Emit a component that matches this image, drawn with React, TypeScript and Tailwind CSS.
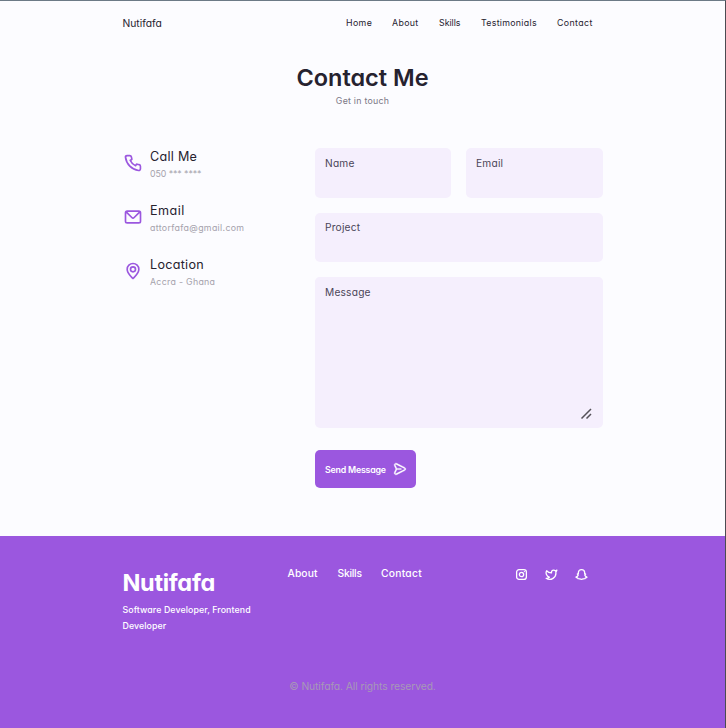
import type { ReactNode } from 'react';

type IconProps = { className: string; children: ReactNode };

function SolidIcon({ className, children }: IconProps) {
  return (
    <svg viewBox="0 0 24 24" fill="currentColor" className={`block shrink-0 ${className}`}>
      {children}
    </svg>
  );
}

function LineIcon({ className, children }: IconProps) {
  return (
    <svg
      viewBox="0 0 24 24"
      fill="none"
      stroke="currentColor"
      strokeWidth="2.4"
      strokeLinecap="round"
      strokeLinejoin="round"
      className={`block shrink-0 ${className}`}
    >
      {children}
    </svg>
  );
}

const contacts = [
  {
    title: 'Call Me',
    detail: '050 *** ****',
    iconClass: 'mt-[4.5px]',
    titleClass: 'tracking-[0.28px]',
    detailClass: 'tracking-[-0.07px]',
    path: 'M19.44,13c-.22,0-.45-.07-.67-.12a9.44,9.44,0,0,1-1.31-.39,2,2,0,0,0-2.48,1l-.22.45a12.18,12.18,0,0,1-2.66-2,12.18,12.18,0,0,1-2-2.66L10.52,9a2,2,0,0,0,1-2.48,10.33,10.33,0,0,1-.39-1.31c-.05-.22-.09-.45-.12-.68a3,3,0,0,0-3-2.49h-3a3,3,0,0,0-3,3.41A19,19,0,0,0,18.53,21.91l.38,0a3,3,0,0,0,2-.76,3,3,0,0,0,1-2.25v-3A3,3,0,0,0,19.44,13Zm.5,6a1,1,0,0,1-.34.75,1.05,1.05,0,0,1-.82.25A17,17,0,0,1,4.07,5.22a1.09,1.09,0,0,1,.25-.82,1,1,0,0,1,.75-.34h3a1,1,0,0,1,1,.79q.06.41.15.81a11.12,11.12,0,0,0,.46,1.55l-1.4.65a1,1,0,0,0-.49,1.33,14.49,14.49,0,0,0,7,7,1,1,0,0,0,.76,0,1,1,0,0,0,.57-.52l.62-1.4a13.69,13.69,0,0,0,1.58.46q.4.09.81.15a1,1,0,0,1,.79,1Z',
  },
  {
    title: 'Email',
    detail: 'attorfafa@gmail.com',
    iconClass: 'mt-[5px]',
    titleClass: 'tracking-[0.45px]',
    detailClass: 'tracking-[0.33px]',
    path: 'M19,4H5A3,3,0,0,0,2,7V17a3,3,0,0,0,3,3H19a3,3,0,0,0,3-3V7A3,3,0,0,0,19,4Zm-.41,2-5.88,5.88a1,1,0,0,1-1.42,0L5.41,6ZM20,17a1,1,0,0,1-1,1H5a1,1,0,0,1-1-1V7.41l5.88,5.88a3,3,0,0,0,4.24,0L20,7.41Z',
  },
  {
    title: 'Location',
    detail: 'Accra - Ghana',
    iconClass: 'mt-[5px]',
    titleClass: 'tracking-[0.28px]',
    detailClass: 'tracking-[0.3px]',
    path: 'M12,2A8,8,0,0,0,4,9.92c0,5.48,7.05,11.58,7.35,11.84a1,1,0,0,0,1.3,0C13,21.5,20,15.4,20,9.92A8,8,0,0,0,12,2Zm0,17.65c-1.67-1.59-6-6-6-9.73a6,6,0,0,1,12,0C18,13.7,13.67,18.06,12,19.65ZM12,6a4,4,0,1,0,4,4A4,4,0,0,0,12,6Zm0,6a2,2,0,1,1,2-2A2,2,0,0,1,12,12Z',
  },
];

const navLinks = [
  { label: 'Home', className: 'w-[46px] tracking-[0.4px]' },
  { label: 'About', className: 'w-[47px] tracking-[0.35px]' },
  { label: 'Skills', className: 'w-[42px]' },
  { label: 'Testimonials', className: 'w-[76px] tracking-[0.3px]' },
  { label: 'Contact', className: 'w-[46px] tracking-[0.4px]' },
];

function Field({ label, className }: { label: string; className: string }) {
  return (
    <div className={`rounded-[5px] bg-[#f5effd] px-[10px] text-[10.2px] leading-[15px] tracking-[0.2px] text-[#4a4558] ${className}`}>
      {label}
    </div>
  );
}

export default function App() {
  return (
    <div className="flex h-[728px] w-[726px] flex-col border-t border-r border-t-[#6c7a86] border-r-[#4b4b52] bg-[#fcfcff] font-['Inter','Open_Sans',sans-serif] whitespace-nowrap text-[#26222f] [font-feature-settings:'cv11']">
      <header className="flex h-[45px] items-center pl-[122.5px]">
        <a className="w-[223.5px] pt-px text-[10.3px] font-[430]">Nutifafa</a>
        <nav className="flex pb-[2px] text-[8.8px] font-[430]">
          {navLinks.map((link) => (
            <a key={link.label} className={link.className}>{link.label}</a>
          ))}
        </nav>
      </header>

      <main className="h-[490px]">
        <div className="flex flex-col items-center pt-[15px]">
          <h1 className="text-[23.5px] leading-[34px] font-semibold">Contact Me</h1>
          <p className="-mt-px text-[8.8px] leading-[13px] tracking-[0.25px] text-[#7b7785]">Get in touch</p>
        </div>

        <div className="mt-[41px] flex pl-[122.5px]">
          <div className="flex w-[192.5px] flex-col">
            {contacts.map((item) => (
              <div key={item.title} className="flex h-[54px] gap-[7.5px]">
                <SolidIcon className={`size-[20px] text-[#9b57df] ${item.iconClass}`}>
                  <path d={item.path} />
                </SolidIcon>
                <div>
                  <h3 className={`text-[12.6px] leading-[17px] ${item.titleClass}`}>{item.title}</h3>
                  <p className={`pt-px text-[8.8px] leading-[15px] text-[#a5a2ac] ${item.detailClass}`}>{item.detail}</p>
                </div>
              </div>
            ))}
          </div>

          <form className="flex w-[288px] flex-col">
            <div className="flex h-[50px] gap-[15px]">
              <Field label="Name" className="w-[136px] pt-[8px]" />
              <Field label="Email" className="w-[137px] pt-[8px]" />
            </div>
            <Field label="Project" className="mt-[15px] h-[49px] pt-[7px]" />
            <div className="mt-[15px] flex h-[151px] flex-col justify-between rounded-[5px] bg-[#f5effd] pb-[8px]">
              <Field label="Message" className="h-[30px] pt-[8px]" />
              <svg viewBox="0 0 12 12" className="mr-[11px] size-[12px] self-end" fill="none" stroke="#555159" strokeWidth="1.5">
                <path d="M1.500 10.500 L11 1 M6.500 10.500 L11 6" />
              </svg>
            </div>
            <button
              type="button"
              className="mt-[22px] flex h-[38px] w-[101px] items-center rounded-[5px] bg-[#9b57df] pl-[10px] text-[8.8px] font-semibold text-white"
            >
              <span className="w-[68px] pt-[2px] text-left tracking-[-0.2px]">Send Message</span>
              <SolidIcon className="size-[14px]">
                <path
                  stroke="currentColor"
                  strokeWidth="0.6"
                  d="M20.34,9.32l-14-7a3,3,0,0,0-4.08,3.9l2.4,5.37h0a1.06,1.06,0,0,1,0,.82l-2.4,5.37A3,3,0,0,0,5,22a3.14,3.14,0,0,0,1.35-.32l14-7a3,3,0,0,0,0-5.36Zm-.89,3.57-14,7a1,1,0,0,1-1.35-1.3l2.39-5.37A2,2,0,0,0,6.57,13h6.89a1,1,0,0,0,0-2H6.57a2,2,0,0,0-.08-.22L4.1,5.41a1,1,0,0,1,1.35-1.3l14,7a1,1,0,0,1,0,1.78Z"
                />
              </SolidIcon>
            </button>
          </form>
        </div>
      </main>

      <footer className="h-[192px] bg-[#9b57df] text-white">
        <div className="flex h-[143px] pl-[122.5px]">
          <div className="w-[165px] pt-[29px]">
            <h2 className="text-[23.5px] leading-[36px] font-bold tracking-[-0.3px]">Nutifafa</h2>
            <p className="pt-px text-[8.8px] leading-[16px] font-medium tracking-[0.1px]">
              Software Developer, Frontend
              <br />
              Developer
            </p>
          </div>
          <nav className="flex w-[227.5px] pt-[29px] text-[10.3px] leading-[16px] font-medium">
            <a className="w-[50px] tracking-[0.1px]">About</a>
            <a className="w-[43.5px] tracking-[-0.25px]">Skills</a>
            <a className="tracking-[0.25px]">Contact</a>
          </nav>
          <div className="flex gap-[17px] pt-[32px]">
            <LineIcon className="size-[13px]">
              <rect x="3" y="3" width="18" height="18" rx="4.5" />
              <circle cx="12" cy="12" r="4" />
              <path d="M17.3 6.6h.05" />
            </LineIcon>
            <LineIcon className="size-[13px]">
              <path d="M22 4s-.7 2.1-2 3.4c1.6 10-9.4 17.3-18 11.6 2.2.1 4.4-.6 6-2C3 15.5.5 9.6 3 5c2.2 2.6 5.6 4.1 9 4-.9-4.2 4-6.6 7-3.8 1.1 0 3-1.2 3-1.2z" />
            </LineIcon>
            <LineIcon className="size-[13px]">
              <path d="M12 3C8.500 3 6.200 5.300 6.200 8.500v2L4.300 11.300 6 13c-.7 2-2.300 3.300-4.200 4 .6 1 1.800 1.300 3.200 1.400l.6 1.300c2.200-.4 3.600 1.300 6.400 1.300s4.200-1.700 6.400-1.300l.6-1.300c1.400-.1 2.600-.4 3.200-1.400-1.900-.7-3.500-2-4.200-4l1.700-1.700-1.900-.8v-2C17.800 5.300 15.500 3 12 3z" />
            </LineIcon>
          </div>
        </div>
        <p className="text-center text-[10.3px] leading-[14px] tracking-[-0.08px] text-[#a798b7]">© Nutifafa. All rights reserved.</p>
      </footer>
    </div>
  );
}
